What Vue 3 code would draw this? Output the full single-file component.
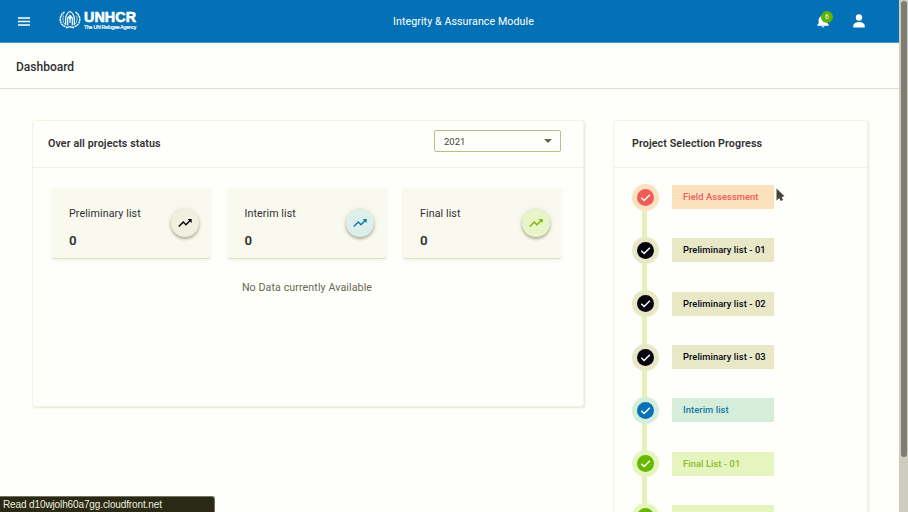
<script setup>
const lists = [
  { name: 'Preliminary list', count: 0, tone: 'black' },
  { name: 'Interim list', count: 0, tone: 'blue' },
  { name: 'Final list', count: 0, tone: 'green' },
]
const steps = [
  { name: 'Field Assessment', tone: 'red' },
  { name: 'Preliminary list - 01', tone: 'black' },
  { name: 'Preliminary list - 02', tone: 'black' },
  { name: 'Preliminary list - 03', tone: 'black' },
  { name: 'Interim list', tone: 'blue' },
  { name: 'Final List - 01', tone: 'green' },
  { name: '', tone: 'green' },
]
</script>

<template>
  <div class="window">
    <div class="page">
      <header class="bar">
        <svg class="menu" viewBox="0 0 12 9"><path d="M0 1h12M0 4.500h12M0 8h12" /></svg>
        <div class="logo">
          <svg class="emblem" viewBox="0 0 22 19">
            <path d="M5.500 2C2.500 4 .8 7 1.300 10.500S4 16 8 17.300M16.500 2c3 2 4.700 5 4.200 8.500S18 16 14 17.300" stroke-width="1.500" stroke-dasharray="2.200 .5" />
            <path d="M4.500 5.500C3.300 8.500 3.800 12 6 14.300M17.500 5.500c1.200 3 .7 6.500-1.500 8.800" stroke-width=".7" />
            <path d="M6.700 15V7.500Q7.700 3 11 1.500 14.300 3 15.300 7.500V15M8.700 15.500V8L11 5.500 13.300 8v7.500M11 9v4M7 17.900l4-1.200 4 1.200" stroke-width="1.200" />
            <circle cx="11" cy="8" r="1.200" fill="#fff" stroke="none" />
          </svg>
          <div class="wordmark">
            <strong>UNHCR</strong>
            <span>The UN Refugee Agency</span>
          </div>
        </div>
        <div class="module">Integrity &amp; Assurance Module</div>
        <div class="bell">
          <svg viewBox="0 0 12 14"><path d="M6 13.500c.8 0 1.500-.5 1.500-1.200h-3c0 .7.700 1.200 1.500 1.200zM10.500 9.500V6.500C10.500 4.200 9.200 2.600 7.200 2.100V1.500a1.200 1.200 0 0 0-2.400 0v.6C2.800 2.600 1.600 4.200 1.600 6.500v3L.2 11v.8h11.600V11z" /></svg>
          <span class="badge">6</span>
        </div>
        <svg class="user" viewBox="0 0 12 14"><circle cx="6" cy="3.500" r="3.200" /><path d="M6 8c-2.200 0-5.700 1.200-5.700 3.700v1.800h11.400v-1.800C11.700 9.200 8.200 8 6 8z" /></svg>
      </header>

      <div class="title">Dashboard</div>

      <main class="content">
        <section class="card overall">
          <div class="head">
            <h2>Over all projects status</h2>
            <div class="select">2021<i class="caret"></i></div>
          </div>
          <div class="tiles">
            <div v-for="l in lists" :key="l.name" class="tile">
              <div>
                <div class="name">{{ l.name }}</div>
                <div class="count">{{ l.count }}</div>
              </div>
              <div class="disc" :class="l.tone">
                <svg viewBox="0 0 24 24"><path d="M16 6l2.290 2.290-4.880 4.880-4-4L2 16.590 3.410 18l6-6 4 4 6.300-6.290L22 12V6z" /></svg>
              </div>
            </div>
          </div>
          <p class="empty">No Data currently Available</p>
        </section>

        <section class="card progress">
          <div class="head"><h2>Project Selection Progress</h2></div>
          <ol class="steps">
            <li v-for="(s, i) in steps" :key="i" :class="s.tone">
              <span class="mark">
                <span class="dot"><svg viewBox="0 0 17 17"><path d="M4.300 8.800l2.800 2.800 5.800-5.900" /></svg></span>
              </span>
              <span class="pill">{{ s.name }}</span>
            </li>
          </ol>
        </section>
      </main>
    </div>
    <div class="scroll"><div class="thumb"></div></div>
    <div class="status">Read d10wjolh60a7gg.cloudfront.net</div>
    <svg class="cursor" viewBox="0 0 9 14"><path d="M.5.5v12l2.800-2.500 1.500 3 2.200-1-1.300-3 2.800-.7z" /></svg>
  </div>
</template>

<style>
body { margin: 0; overflow: hidden; }
</style>

<style scoped>
* { box-sizing: border-box; }
.window { position: relative; display: flex; width: 908px; height: 512px; overflow: hidden; background: #fefefa; font-family: Roboto, "Liberation Sans", sans-serif; color: #303033; }
.page { width: 899px; height: 512px; overflow: hidden; }
.bar { display: flex; align-items: center; height: 43px; padding: 0 34px 0 18px; background: #0471b7; border-bottom: 1px solid #4a9bc3; color: #fff; }
.menu { width: 12px; height: 9px; stroke: #fff; stroke-width: 1.3; flex: none; }
.logo { display: flex; align-items: center; width: 80px; margin: -3px 0 0 29px; }
.emblem { width: 22px; height: 19px; flex: none; fill: none; stroke: #fff; }
.wordmark { display: flex; flex-direction: column; padding: 1px 0 0 3px; font-family: "Liberation Sans", Arial, sans-serif; white-space: nowrap; }
.wordmark strong { font-size: 14.3px; line-height: 13px; letter-spacing: .1px; -webkit-text-stroke: .6px #fff; }
.wordmark span { font-size: 5.2px; line-height: 6px; letter-spacing: -.25px; -webkit-text-stroke: .2px #fff; }
.module { width: 143px; margin-left: 254px; font-size: 10.7px; letter-spacing: .06px; white-space: nowrap; }
.bell { position: relative; width: 12px; height: 14px; margin-left: 281px; }
.bell svg { width: 12px; height: 14px; fill: #fff; display: block; }
.badge { position: absolute; left: 4px; top: -3px; width: 12px; height: 12px; border-radius: 50%; background: #5db300; font-size: 7px; line-height: 12px; text-align: center; }
.user { width: 12px; height: 14px; margin-left: auto; fill: #fff; }
.title { height: 46px; padding-left: 16px; border-bottom: 1px solid #e2e2c4; font-size: 12px; line-height: 48px; font-weight: 500; }
.content { display: flex; align-items: flex-start; gap: 29px; padding: 31px 31px 0 32px; }
.card { flex: none; background: #fefefa; border: 1px solid #f4f4e3; border-radius: 3px; box-shadow: 1px 1px 2px rgba(115, 155, 100, .22); }
.overall { width: 552px; height: 287px; }
.progress { width: 255px; height: 500px; }
.head { display: flex; align-items: center; justify-content: space-between; height: 47px; padding: 0 22px 0 15px; border-bottom: 1px solid #efefe4; }
.progress .head { padding-left: 18px; }
h2 { margin: 0; font-size: 10.7px; line-height: 14px; font-weight: 600; letter-spacing: .1px; white-space: nowrap; }
.select { display: flex; align-items: center; justify-content: space-between; width: 127px; height: 22px; margin-top: -6px; padding: 0 8px 0 9px; border: 1px solid #b9bd88; border-radius: 2px; font-size: 9.5px; color: #444; }
.caret { border: 4px solid transparent; border-top-color: #66664f; border-bottom: 0; }
.tiles { display: flex; gap: 17.500px; padding: 20px 0 0 19px; }
.tile { display: flex; justify-content: space-between; width: 158px; height: 71px; padding: 18px 11.500px 0 17px; background: #f9f9f0; border-bottom: 1px solid #dae5bd; border-radius: 2px; box-shadow: 0 1px 3px rgba(150, 170, 110, .17); }
.name { font-size: 10.7px; line-height: 16px; letter-spacing: .08px; }
.count { margin-top: 11px; font-size: 13.300px; line-height: 16px; font-weight: 600; }
.disc { display: flex; align-items: center; justify-content: center; width: 28px; height: 28px; margin-top: 3px; border-radius: 50%; box-shadow: 0 2px 3px rgba(70, 70, 40, .38), 0 0 5px rgba(130, 130, 70, .18); }
.disc svg { width: 16px; height: 16px; }
.disc.black { background: #f0f0e0; fill: #000; }
.disc.blue { background: #dcf0e9; fill: #0878a8; }
.disc.green { background: #e9f5c9; fill: #77b900; }
.empty { margin: 21px 0 0; padding-right: 2px; text-align: center; font-size: 10.7px; line-height: 16px; letter-spacing: .08px; color: #686858; }
.steps { margin: 0; padding: 2.500px 0 0 18px; list-style: none; }
.steps li { display: flex; align-items: center; height: 53.300px; background: linear-gradient(#e6f0b8, #e6f0b8) 10px 0 / 5px 100% no-repeat; }
.steps li:first-child { background-position: 10px 27px; }
.mark { display: flex; align-items: center; justify-content: center; width: 27px; height: 27px; border-radius: 50%; background: var(--soft); }
.dot { width: 17px; height: 17px; border-radius: 50%; background: var(--main); }
.dot svg { display: block; fill: none; stroke: #fff; stroke-width: 1.400; }
.pill { width: 102px; height: 24px; margin-left: 13px; padding-left: 11px; background: var(--soft); color: var(--text, var(--main)); font-size: 9.330px; line-height: 24px; font-weight: 500; letter-spacing: .08px; white-space: nowrap; }
.red { --main: #ef5b59; --soft: #fce1bf; }
.steps .black { --main: #050510; --soft: #e8e8c6; }
.steps .blue { --main: #0872b9; --soft: #d6edda; --text: #1278a6; }
.steps .green { --main: #68b800; --soft: #e5f5bd; --text: #8ab92c; }
.scroll { width: 9px; height: 512px; padding: 1px 2px 0; background: #cdcdbf; }
.thumb { width: 6px; height: 456px; border-radius: 3px; background: #7d7d72; }
.status { position: absolute; left: 0; bottom: 0; width: 215px; height: 16px; padding-left: 3px; background: #292916; border-top: 1px solid #727261; border-right: 1px solid #727261; border-top-right-radius: 3px; color: #eeeedf; font: 10px/15px "Liberation Sans", Arial, sans-serif; letter-spacing: -.12px; white-space: nowrap; }
.cursor { position: absolute; left: 776px; top: 188px; width: 9px; height: 14px; fill: #44443b; }
</style>
